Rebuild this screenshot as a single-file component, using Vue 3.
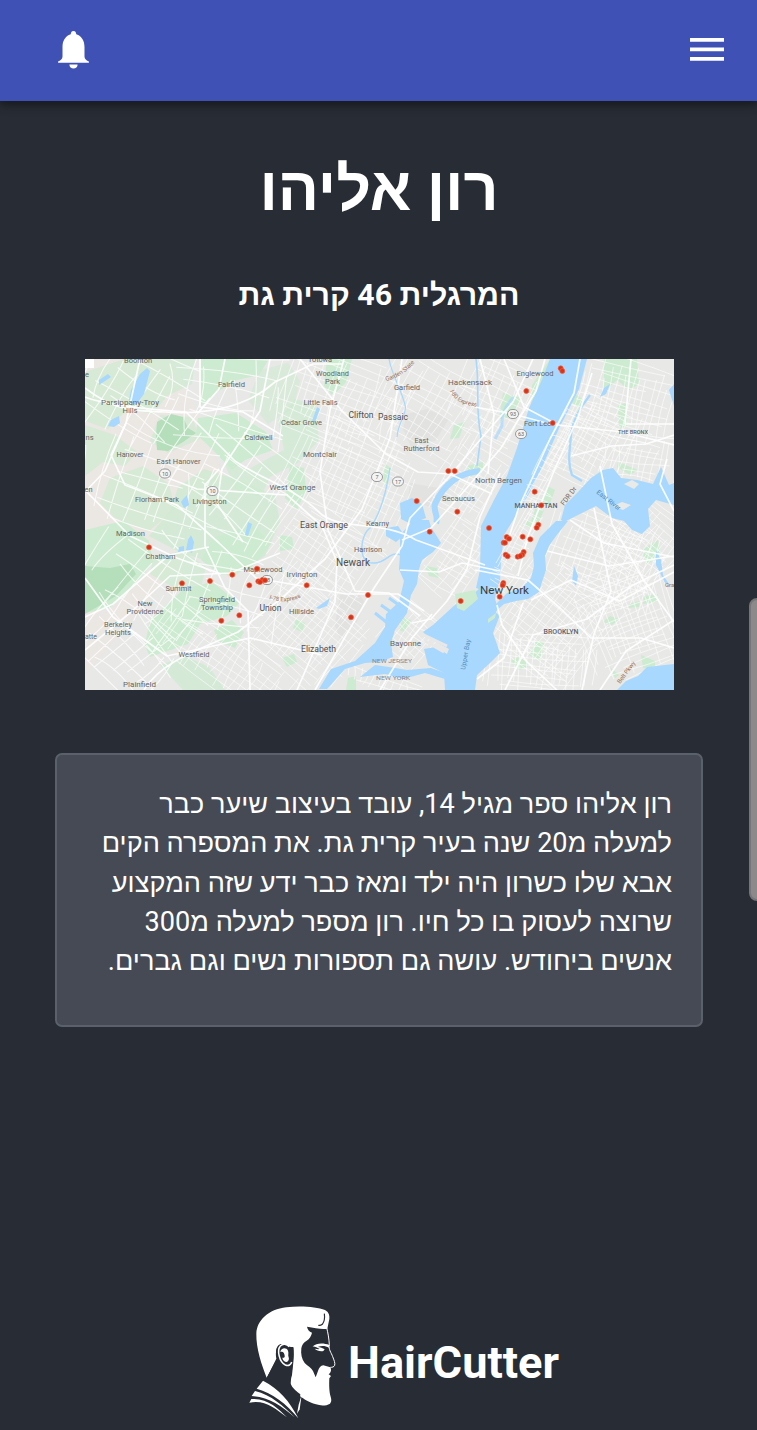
<script setup>
const bioLines = [
  'רון אליהו ספר מגיל 14, עובד בעיצוב שיער כבר',
  'למעלה מ20 שנה בעיר קרית גת. את המספרה הקים',
  'אבא שלו כשרון היה ילד ומאז כבר ידע שזה המקצוע',
  'שרוצה לעסוק בו כל חיו. רון מספר למעלה מ300',
  'אנשים ביחודש. עושה גם תספורות נשים וגם גברים.',
]

// Map labels: text, centre x, baseline y, width, size, style
const labels = [
  ['Boonton', 138, 363, 28, 7, ''],
  ['Totowa', 320, 361.5, 24, 7, ''],
  ['Fairfield', 231.5, 387, 27, 7, ''],
  ['Parsippany-Troy', 130, 405, 58, 7.5, ''],
  ['Hills', 130, 413, 15, 7.5, ''],
  ['Woodland', 332.5, 376, 33, 7, ''],
  ['Park', 332.5, 384, 15, 7, ''],
  ['Little Falls', 320.5, 405, 34, 7, ''],
  ['Cedar Grove', 301.5, 425, 41, 7, ''],
  ['Caldwell', 258.5, 440, 28, 7, ''],
  ['Clifton', 361, 418, 25, 8.5, 'mid'],
  ['Passaic', 393, 420, 30, 8.5, 'mid'],
  ['Garfield', 407, 390, 26, 7, ''],
  ['Hackensack', 470, 385, 44, 7.5, ''],
  ['Englewood', 535, 376, 37, 7, ''],
  ['Fort Lee', 537.5, 426, 27, 7, ''],
  ['Hanover', 130, 457, 27, 7, ''],
  ['East Hanover', 178.5, 463.5, 44, 7, ''],
  ['Montclair', 320, 457, 34, 7.5, ''],
  ['East', 421.5, 443, 14, 7, ''],
  ['Rutherford', 421.5, 451, 36, 7, ''],
  ['THE BRONX', 633, 433.5, 30, 5, 'area'],
  ['North Bergen', 498.5, 483, 47, 7.5, ''],
  ['West Orange', 292.5, 490, 46, 7.5, ''],
  ['Florham Park', 157, 502, 44, 7, ''],
  ['Livingston', 209.5, 504, 34, 7, ''],
  ['Secaucus', 458.5, 500.5, 33, 7, ''],
  ['MANHATTAN', 536, 508, 43, 6.5, 'area'],
  ['East Orange', 324, 527.5, 48, 8.5, 'mid'],
  ['Kearny', 377.5, 526, 23, 7, ''],
  ['Madison', 130.5, 536, 29, 7, ''],
  ['Chatham', 160.5, 558.5, 30, 7, ''],
  ['Harrison', 368, 552, 28, 7, ''],
  ['Newark', 353, 566, 34, 10, 'mid'],
  ['Irvington', 302, 576.5, 31, 7.5, ''],
  ['Maplewood', 263, 572, 39, 7.5, ''],
  ['Summit', 178.5, 590.5, 26, 7.5, ''],
  ['New York', 504.5, 594, 49, 11.5, 'city'],
  ['New', 145, 606, 15, 7, ''],
  ['Providence', 145, 613.5, 37, 7, ''],
  ['Springfield', 217, 602, 36, 7, ''],
  ['Township', 217, 609.5, 32, 7, ''],
  ['Union', 270.5, 611, 22, 8.5, 'mid'],
  ['Hillside', 301.5, 613.5, 25, 7, ''],
  ['Berkeley', 118, 627, 28, 7, ''],
  ['Heights', 118, 634.5, 26, 7, ''],
  ['BROOKLYN', 561, 634, 35, 6.5, 'area'],
  ['Bayonne', 405.5, 645.5, 31, 7.5, ''],
  ['Elizabeth', 318.5, 651.5, 35, 8.5, 'mid'],
  ['Westfield', 194, 657, 31, 7, ''],
  ['NEW JERSEY', 392, 663, 40, 6, 'state'],
  ['NEW YORK', 393, 680, 34, 6, 'state'],
  ['Plainfield', 139.5, 687, 33, 7.5, ''],
  ['ns', 89.5, 440, 8, 7, ''],
  ['en', 88.5, 492, 8, 7.5, ''],
  ['atte', 91, 639, 12, 7, ''],
  ['e', 87, 377, 4, 7, ''],
]

const shields = [
  [165, 473.5, '10'], [212.5, 491, '10'], [377, 477, '7'], [398, 481.5, '17'],
  [513, 414, '93'], [521, 434, '63'], [267, 580, '78'],
]

const pins = [
  [448.3, 471], [454.7, 471], [416.7, 501], [457.3, 511.7], [560.7, 368.3],
  [562.3, 371], [526.3, 391], [552.7, 423], [534.7, 491.7], [541.3, 505.3],
  [538.3, 524.7], [536.7, 527.7], [489, 528], [506.7, 537], [509, 538.7],
  [503.7, 542.7], [505, 542.7], [522.7, 536.7], [530.3, 539.3], [505.7, 554.7],
  [507.7, 556.3], [523.7, 552], [522.3, 554.7], [517.7, 556.7], [520.3, 556],
  [503.3, 583], [502.7, 585.3], [499.7, 596.7], [149, 547.3], [182, 583.3],
  [210, 581], [232.3, 574.7], [249.3, 585.3], [257, 568.7], [258.3, 581.3],
  [262.3, 580], [265, 580.3], [260, 582], [221.3, 620.7], [239.3, 615.3],
  [429.7, 531.7], [306.7, 585.3], [368, 595], [351, 617.3], [460.7, 601],
]

// Side streets: each district gets a slightly irregular grid
let seed = 11
const rnd = () => {
  seed = (seed * 16807) % 2147483647
  return seed / 2147483647
}
const district = (cx, cy, w, h, deg, step) => {
  const a = (deg * Math.PI) / 180
  const pt = (x, y) =>
    `${(cx + x * Math.cos(a) - y * Math.sin(a)).toFixed(1)} ${(cy + x * Math.sin(a) + y * Math.cos(a)).toFixed(1)}`
  const j = () => (rnd() - 0.5) * step * 0.9
  let d = ''
  for (let x = -w / 2; x <= w / 2; x += step) {
    d += `M${pt(x + j(), -h / 2 + rnd() * h * 0.3)}Q${pt(x + j(), j())} ${pt(x + j(), h / 2 - rnd() * h * 0.3)}`
  }
  for (let y = -h / 2; y <= h / 2; y += step) {
    d += `M${pt(-w / 2 + rnd() * w * 0.3, y + j())}Q${pt(j(), y + j())} ${pt(w / 2 - rnd() * w * 0.3, y + j())}`
  }
  return d
}
const denseStreets = [
  district(340, 400, 130, 90, 20, 8), district(350, 480, 130, 110, 25, 7),
  district(320, 560, 110, 90, 35, 8), district(310, 630, 110, 100, 40, 7),
  district(430, 410, 110, 90, 30, 9), district(500, 400, 90, 80, 25, 8),
  district(470, 480, 60, 90, 32, 7), district(455, 560, 50, 80, 35, 7),
  district(620, 400, 110, 80, 15, 7), district(590, 440, 80, 90, 28, 6),
  district(640, 460, 70, 50, 10, 7), district(600, 560, 120, 90, 20, 7),
  district(550, 620, 110, 110, 38, 6), district(630, 620, 100, 110, -20, 6),
  district(540, 665, 110, 60, 5, 6), district(410, 635, 50, 60, 40, 6),
  district(220, 660, 160, 60, 35, 8), district(390, 685, 90, 20, 20, 7),
  district(640, 540, 80, 80, 40, 6),
].join('')
const sparseStreets = [
  district(140, 400, 130, 100, 30, 17), district(230, 400, 120, 90, 10, 17),
  district(150, 490, 140, 100, 20, 18), district(240, 490, 120, 100, 35, 16),
  district(150, 590, 140, 100, 40, 18), district(230, 590, 110, 100, 15, 17),
  district(130, 650, 100, 80, 45, 13),
].join('')
const manhattanStreets = [
  district(521, 540, 24, 110, 28, 5), district(551, 460, 22, 110, 28, 6),
].join('')
</script>

<template>
  <div class="page" dir="rtl">
    <header class="bar">
      <button class="icon-btn" aria-label="תפריט">
        <svg class="menu" viewBox="0 0 34 23"><path d="M0 0h34v3.800H0zM0 9.400h34v3.800H0zM0 18.900h34v3.800H0z" /></svg>
      </button>
      <button class="icon-btn" aria-label="התראות">
        <svg class="bell" viewBox="0 0 30 37">
          <path d="M15 0c1.700 0 2.500 1.200 2.700 3.200 5.300 1.700 8 6.300 8 12.300v9c0 2.500 1.300 3.500 4.300 5.200v1.300H0v-1.300c3-1.700 4.300-2.700 4.300-5.200v-9c0-6 2.700-10.600 8-12.300C12.500 1.200 13.300 0 15 0zM11 32.600h8c0 2.300-1.800 4-4 4s-4-1.700-4-4z" />
        </svg>
      </button>
    </header>

    <main class="content">
      <h1 class="name">רון אליהו</h1>
      <h2 class="address">המרגלית 46 קרית גת</h2>

      <svg class="map" viewBox="85 359 589 331" direction="ltr">
        <rect x="85" y="359" width="589" height="331" fill="#e8e8e7" />
        <path fill="#ebe7e3" d="M85 359h85l30 60 25 60-55 40-40 60-45 50zM110 610l60-60 25-5-60 70-50 60v-50z" />
        <g fill="#cdebd0">
          <path d="M85 372l40-13h70l-3 25-25 12-14 18-25-5-20 20-23-8z" opacity=".65" />
          <path d="M201 359h68l-10 16-22 5-20 12-16 14z" />
          <path d="M198 418l38-5 30 19 7 18-28 10-13 10-20-21-16-15z" />
          <path d="M160 415l32 2 8 22-32 14-18-12z" opacity=".6" />
          <path d="M85 425l30 10 22 17-12 14-22-4-18 14z" opacity=".7" />
          <path d="M110 478l33-12 26 18 6 25-26 22-33-12-16-16z" opacity=".7" />
          <path d="M178 487l26-18 37 12 34 15 5 26-15 34-34 22-24-17-28-9-30-16 22-26z" opacity=".75" />
          <path d="M224 463l25 6 35-19-6-30 17-21 20 6 4 35-21 23-28 14-9 20-24-6z" opacity=".7" />
          <path d="M260 370l28-7 12 18-7 27-25 16-20-24z" opacity=".55" />
          <path d="M327 359h25l-6 23-13 14-9-10z" />
          <path d="M290 465l14 3 2 22-9 20-12-12z" />
          <path d="M85 530l38-9 26 20 4 21-22 28-22 18-24 5z" />
          <path d="M150 620l34-31 28-7 27 21-12 13-27 8-12 20-38 13-5-12z" />
          <path d="M153 560l29-10 24 17-6 24-25-3-25-14z" opacity=".7" />
          <path d="M214 630l18-10 12 12-9 16-17-7z" />
          <path d="M160 665l25-9 24 11 16 23h-42z" opacity=".75" />
          <path d="M212 538l40-13 20 18-22 26-29 6-20-15z" />
          <path d="M280 535l12 2 2 12-14 2zM296 619l9 4-3 9-9-4zM282 658l12-4 3 8-10 5zM348 678l8-2v14h-10z" />
          <path d="M550 359h17l-19 39-17 6 1-19zM503 393l19 5-11 19-12 2zM604 359h33l2 25-10 6-12-10-13 12zM618 406l9-4v24l-8 3zM575 394l10 6-5 10-9-8z" />
          <path d="M454 425l11-3-6 16-9 1zM467 466l16-4v9l-13 6zM385 464l6 4-5 18-3-5zM425 566l12 2 2 10-10-2zM403 617l8 3-7 12-5-2z" />
          <path d="M547 486l8 4-6 16-7-2zM536 507l8 3-6 14-7-3zM528 520l7 2-4 6-6-2zM642 550l16-10 2 18-14 6zM631 603l9-2-1 6-11 1zM644 596l14-2-2 8-13 2zM610 616l9 3-7 6-9-3zM537 640l7 3-3 18-12-6zM511 661l9-5 9 10-10 4zM618 462l20 8-8 5-13-8zM610 667l9 8-4 3zM641 655l14 6 0 8-12-1z" />
        </g>
        <path fill="#b5debb" d="M157 422l14-8 12 3 5 11 8 5-13 9-15 9-11-1-1-13zM85 566l25 2 20-4 6 10-20 22-31 18z" />
        <path fill="#dedede" d="M407 414l20-5 22 10-14 22-24 6-8-18zM340 595l19-1 5 7-7 21-17 17-5-14zM410 483l28 5-5 20-25-8z" opacity=".6" />

        <g class="minor">
          <path :d="sparseStreets" stroke-width="1.100" />
          <path :d="denseStreets" stroke-width=".8" />
        </g>

        <g fill="#a8d8fd">
          <path d="M569 359h18l-8 30-12 24-7 13-17 39-13 27-15 25-11 18-3 26-1 20-4 11-8 0-12-4 4-18 1-44 13-26 13-24 10-28 12-40 12-26 11-28z" />
          <path d="M480 588h17l-2 10 2 8-1 7 4 2-7 18 7 20-10 10-13 12-2 15h-30l-1-17-16-8-4-16 12-2 11 7 2-5-20-11-6-6 10-7 24-22 13-6z" />
          <path d="M400 535l14-15 15 0 2 7 10 16-8 9-11 8-3 9-2 15-6 11-4 18-12 17-4 13 2 14-14 5-14 1-20 6-18 20h-8l12-20 24-8 20-18 10-16 1-13 13-12 5-21-5-12 1-14z" />
          <path d="M375 665l14 2 18 3 24-2 14 5v6l-20-6-22 6-18-5-25 3z" />
          <path d="M386 528l12-2 6 9-8 7-10-6zM400 503l12-5 10 6 4 14-15 6-10-5z" />
          <path d="M561 520l4-15 13-13 13-14 12-8 10-2 8 10 16 2 16 4 8-17 8 18 5-2v22l-18-5-8 9 2 17-8 8-10-4-8-9-12-3-16-12-16 8-16 8z" />
          <path d="M556 521l12 0-12 15-7 10-4 10 1 14-4 12-3 10-11 7-12 2-12 3-9 8-1-6 13-13 15-5 9-10 3-12-1-13 7-16z" />
          <path d="M626 681l12-5 9-9 27-3v26h-57z" />
          <path d="M140 374l7-6 3 3-6 23-8 11-7-5 2-10zM111 420l8-4 1 7-6 4-6-1zM184 498l3-3 2 10-5 3-3-6zM188 540l3-5 3 7-2 11-6-3zM179 547l5-1v5l-6 1z" />
          <path d="M248 522l4 2-4 12-3-1zM317 407l3 2-5 13-3-1zM316 608l14-10-3 8-8 3zM99 380l9-6 3 3-12 8zM604 388l6-4-4 10-6 3zM669 390l5-6v22z" />
          <path d="M574 566l4 10-2 10-4-5zM656 550l5 10 2 15 8 12-6-4-9-18z" />
        </g>
        <g fill="#cdebd0"><path d="M455 594l20-4 3 9-14 12-7-3zM488 619l8-6-1 5-7 5z" /></g>
        <g fill="none" stroke="#a8d8fd">
          <path d="M480 471c-24 2-37 15-45 33-2 8 4 12 1 19" stroke-width="6" />
          <path d="M590 395c-9 11-17 25-19 39-1 16-4 28 1 41l10 6" stroke-width="2.300" />
          <path d="M476 359c4 30-1 50 5 77l-4 30" stroke-width="1.600" />
          <path d="M389 359c3 17 12 29 16 46 3 8-7 17-8 32" stroke-width="1.200" />
          <path d="M401 555c-12-5-14 9-28 8-16 0-13-28-3-35 11-15 17-40 20-60" stroke-width="1.400" />
          <path d="M375 613l15 12m-9-20 17 12m-9-19 14 10m25 28 22 11" stroke-width="3" />
          <path d="M514 397c-8 8-13 17-12 29l-7 13" stroke-width="3" opacity=".7" />
        </g>
        <path d="M424 635l23 11M425 641l19 11" stroke="#e8e8e8" stroke-width="3" />
        <path d="M624 484l8-4 7 4-5 5zM613 506l9-4 9 3-8 5z" fill="#e9e9e8" />
        <g class="minor"><path :d="manhattanStreets" stroke-width=".8" /></g>

        <g class="road">
          <path d="M85 388c28 22 47 23 80 24 44 3 82-5 110-30l38-18h30" stroke-width="2.200" />
          <path d="M85 397c20 8 60 12 101 15l49 49c30 20 62 28 87 54 24 16 62 5 94 25l69 25" />
          <path d="M140 359l-14 64-21 48-20 21" stroke-width="1.800" />
          <path d="M126 423l-15 32 14 30 52 20 42 38 37 35 40 7 50 9h52l26 17" />
          <path d="M85 490l45 46 47 22 44 16" />
          <path d="M85 617l28-13 56-49 40-8M85 650l46-38 39-36 60-3 50-20" />
          <path d="M144 690c18-30 60-42 94-58l45-35 42-38 37-50 28-71 12-79" />
          <path d="M200 359v48l43 5 40 24M225 359l-6 30-21 24" />
          <path d="M219 469l-14 16v61l20 42 23 23 2 79" stroke-width="1.300" />
          <path d="M160 475l37 14 90 6 35 31 15 36-2 40-38 88" />
          <path d="M270 359l-10 52-38 58-5 35 26 38" stroke-width="1.200" />
          <path d="M315 690l30-53 29-49 28-42 8-28 38-40 32-38 33-38 20-43" stroke-width="2.200" />
          <path d="M300 359l42 52 44 43 32 18 32 2 42 20" />
          <path d="M402 540l29-12 28-31 42-49 35-57 9-32" />
          <path d="M344 359l-14 51-10 62 8 58 27 61 34 2 31 23" />
          <path d="M475 407l38 7 37 10 26 3 47 5 51 13" stroke-width="2" />
          <path d="M504 359l20 48 34 18M480 359l14 55-6 60" />
          <path d="M631 359l-6 65 49 0M571 456l40-10 35-2 28-9" />
          <path d="M580 359l-6 34-24 46-31 68-10 30" stroke-width="1.500" />
          <path d="M592 373l-14 44-24 54-26 65-10 40" stroke-width="1.500" />
          <path d="M667 459l-7 25 14 27M600 466l12 58 31 55 31 43" />
          <path d="M475 570l53 10 33 29 30 29 50 0 33 10M497 605l5 20 25 37 30 28" stroke-width="2" />
          <path d="M570 520l34 23 70 14M547 551l62 15 65-10M531 600l40-20 49 21 54-29" />
          <path d="M505 690l28-55 54-16 46-34 41-20M582 690l12-56 17-43-17-83" stroke-width="1.300" />
          <path d="M600 690l26-39 48-31M477 679l27-21 19-55" stroke-width="1.600" />
          <path d="M400 570l39 2 23-9 38 8M412 623l19-4 16-18 20-32 13-52 20-44" />
          <path d="M380 690l32-52 20-24M85 578l28 39 54 39 83-18 72 17" stroke-width="1.300" />
        </g>
        <path d="M85 359h9v9h-9z" fill="#fff" />

        <g class="shields">
          <g v-for="(s, i) in shields" :key="i">
            <rect :x="s[0] - 5.500" :y="s[1] - 4.500" width="11" height="9" rx="4.500" />
            <text :x="s[0]" :y="s[1] + 2">{{ s[2] }}</text>
          </g>
        </g>

        <text
          v-for="(l, i) in labels" :key="'l' + i" class="label" :class="l[5]"
          :x="l[1]" :y="l[2]" :font-size="l[4]" :textLength="l[3]" lengthAdjust="spacingAndGlyphs"
        >{{ l[0] }}</text>

        <path id="gsp" d="M386 381q17-4 31-21" fill="none" />
        <path id="ie" d="M450 391q6 15 32 16" fill="none" />
        <path id="i78" d="M269 599q17 6 35-3" fill="none" />
        <g class="route">
          <text><textPath href="#gsp">Garden State</textPath></text>
          <text><textPath href="#ie">I-80 Express</textPath></text>
          <text><textPath href="#i78">I-78 Express</textPath></text>
          <text transform="translate(620 684) rotate(-53)">Belt Pkwy</text>
          <text x="665" y="587">Gra</text>
        </g>
        <text class="drive" transform="translate(564 506) rotate(-53)">FDR Dr</text>
        <text class="water" transform="translate(596 493) rotate(38)">East River</text>
        <text class="water" transform="translate(465 670) rotate(-80)" textLength="31">Upper Bay</text>

        <circle v-for="(p, i) in pins" :key="'p' + i" class="pin" :cx="p[0]" :cy="p[1]" r="2.500" />
      </svg>

      <section class="bio">
        <p v-for="line in bioLines" :key="line"><span>{{ line }}</span></p>
      </section>
    </main>

    <footer class="brand" dir="ltr">
      <svg class="logo" viewBox="0 0 330 390">
        <path
          fill="#fff"
          d="M80 248C65 210 48 160 49 116 51 76 85 43 139 37 184 32 230 36 255 45 267 52 269 61 268 72L262 101C245 104 225 99 201 95 203 104 207 109 216 113 214 122 209 132 200 137 190 142 186 150 184 160 182 178 185 192 194 204 202 212 214 218 219 228L227 247 234 228C237 218 242 212 250 211L271 217C274 223 274 229 270 234L266 238 273 243 268 250C267 272 268 285 270 298 273 310 277 318 270 326 258 333 242 333 228 328 205 322 192 312 180 304 167 296 156 285 152 272 151 262 153 250 156 240L160 202C162 186 162 170 160 156 143 158 136 143 121 148 107 153 105 174 112 190z"
        />
        <path fill="#282c34" d="M80 249l29-58c-4-21 1-43 18-44 13-1 20 12 33 11 0 27-1 43-4 69-2 14-5 26-5 38 6 15 18 25 30 33l-7 60c-23-36-50-78-94-109z" />
        <path fill="none" stroke="#282c34" stroke-width="3.500" d="M253 56c2 14 0 24-6 32-4 3-8 4-12 3" />
        <path fill="none" stroke="#fff" stroke-width="3" d="M260 98c4 16 7 33 8 51-3 15 6 24 10 36 4 10 8 19 6 26-2 5-7 6-13 6" />
        <path fill="#fff" d="M217 155c13-12 34-11 51-5l-1 8c-11-6-24-6-34-2 8 1 15 3 21 7l-4 5c-10 2-20-1-26-7 6 1 11 2 15 1-9-5-14-8-22-7z" />
        <path fill="none" stroke="#fff" stroke-width="4.500" d="M148 155c-8-9-20-10-27-2-11 13-3 48 15 57 10 4 17-1 19-9" />
        <path fill="#fff" d="M121 171c2-13 18-15 23-4 3 8-1 13 2 20 2 6 0 12-6 14-7 0-12-6-13-13 5 1 8-1 7-6-1-7-4-14-13-11z" />
        <path fill="#fff" d="M69 257c48 25 80 61 106 113-38-46-76-74-125-89z" />
        <path fill="#fff" d="M45 288c49 12 85 45 119 79-40-36-81-62-129-64zM34 312c48-3 81 28 107 55-36-28-68-54-113-44z" />
        <path fill="#fff" d="M185 299l-6 44-8 13 5-27z" />
      </svg>
      <span class="brand-name">HairCutter</span>
    </footer>

    <div class="scroll-thumb" />
  </div>
</template>

<style>
body { margin: 0; background: #282c34; }
</style>

<style scoped>
.page {
  position: relative;
  width: 757px;
  height: 1430px;
  display: flex;
  flex-direction: column;
  overflow: hidden;
  background: #282c34;
  color: #fff;
  font-family: Roboto, "Liberation Sans", sans-serif;
}
.bar {
  height: 101px;
  flex: none;
  box-sizing: border-box;
  padding: 0 33px 2px 58px;
  display: flex;
  align-items: center;
  justify-content: space-between;
  background: #3f51b5;
  box-shadow: 0 4px 8px rgba(0, 0, 0, .32), 0 1px 14px rgba(0, 0, 0, .2);
}
.icon-btn { padding: 0; border: 0; background: none; display: flex; }
.icon-btn svg { fill: #fff; display: block; }
.menu { width: 34px; height: 23px; }
.bell { width: 31px; height: 38px; }
.content { flex: 1; display: flex; flex-direction: column; align-items: center; padding-left: 1px; }
.name { margin: 48px 0 0; height: 80px; line-height: 80px; font-size: 61px; font-weight: 700; white-space: nowrap; }
.address { margin: 46px 0 0; height: 40px; line-height: 40px; font-size: 30.300px; font-weight: 700; white-space: nowrap; }
.map { display: block; width: 589px; height: 331px; margin-top: 44px; }
.bio {
  box-sizing: border-box;
  width: 648px;
  height: 274px;
  margin: 63px 0 0;
  padding: 30px 29px 0;
  border: 2px solid #5b616b;
  border-radius: 7px;
  background: #454a55;
}
.bio p { margin: 0; height: 39.300px; line-height: 39.300px; font-size: 27.130px; white-space: nowrap; }
.brand { flex: none; height: 135px; padding-left: 240px; display: flex; align-items: flex-start; }
.logo { width: 110px; height: 130px; flex: none; }
.brand-name { margin-left: -2px; line-height: 135px; font-size: 45.200px; font-weight: 700; }
.scroll-thumb {
  position: absolute;
  left: 749px;
  top: 598px;
  width: 16px;
  height: 303px;
  box-sizing: border-box;
  border: 2px solid #777577;
  border-radius: 8px;
  background: #8d898a;
}
.minor path { fill: none; stroke: #fff; opacity: .75; }
.road path { fill: none; stroke: #fff; stroke-width: 1.700; stroke-linejoin: round; opacity: .9; }
.label { fill: #666; text-anchor: middle; font-family: Roboto, sans-serif; }
.mid { fill: #505050; }
.city { fill: #3c3c3c; }
.area { fill: #5d6470; font-weight: 500; }
.state { fill: #858990; }
.shields rect { fill: #f4f4f4; stroke: #777; stroke-width: .7; }
.shields text { font-size: 5.500px; fill: #666; text-anchor: middle; }
.route text { font-size: 6px; fill: #9a7052; }
.drive { font-size: 7px; fill: #73675e; }
.water { font-size: 6.500px; fill: #5089b8; }
.pin { fill: #d9341b; stroke: #f0603c; stroke-width: .7; }
</style>
